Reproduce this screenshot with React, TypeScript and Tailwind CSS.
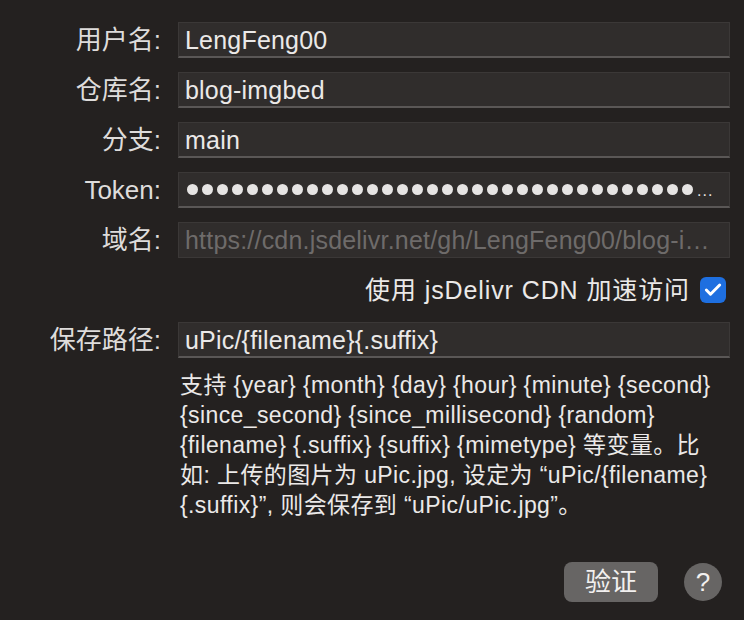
import { Check } from 'lucide-react';

const font = { fontFamily: '"Liberation Sans", "Noto Sans CJK SC", sans-serif' };

function Row({ label, children }: { label: string; children: React.ReactNode }) {
  return (
    <div className="flex items-center h-[36px]">
      <div className="w-[161px] text-right text-[26px] text-[#dedcdb] leading-[30px]">{label}</div>
      <div className="ml-[17px] w-[552px]">{children}</div>
    </div>
  );
}

function Field({ value, dim }: { value: string; dim?: boolean }) {
  return (
    <div
      className={`h-[36px] flex items-center px-[6px] bg-[#302d2c] border border-[#3b3837] ${
        dim ? 'border-b-[#3b3837]' : 'border-b-[#5a5756] border-b-2'
      }`}
    >
      <span className={`truncate text-[25px] leading-[30px] tracking-[0.2px] ${dim ? 'text-[#6e6b6a]' : 'text-[#ebe9e8]'}`}>
        {value}
      </span>
    </div>
  );
}

export default function App() {
  const dots = Array.from({ length: 34 });

  return (
    <div style={font} className="w-[744px] h-[620px] bg-[#242120] pt-[22px] flex flex-col">
      <div className="flex flex-col gap-[14px]">
        <Row label="用户名:">
          <Field value="LengFeng00" />
        </Row>
        <Row label="仓库名:">
          <Field value="blog-imgbed" />
        </Row>
        <Row label="分支:">
          <Field value="main" />
        </Row>
        <Row label="Token:">
          <div className="h-[36px] flex items-center px-[8px] gap-[4px] bg-[#302d2c] border border-[#3b3837] border-b-2 border-b-[#5a5756] overflow-hidden">
            {dots.map((_, i) => (
              <span key={i} className="w-[11px] h-[11px] shrink-0 rounded-full bg-[#e6e4e3]" />
            ))}
            <span className="text-[#e6e4e3] text-[16px] leading-none self-end mb-[7px] tracking-[1px]">...</span>
          </div>
        </Row>
        <Row label="域名:">
          <Field value="https://cdn.jsdelivr.net/gh/LengFeng00/blog-imgbed" dim />
        </Row>
        <div className="h-[36px] flex items-center justify-end pr-[18px] gap-[10px]">
          <span className="text-[25px] text-[#ebe9e8] leading-[30px] tracking-[0.9px]">使用 jsDelivr CDN 加速访问</span>
          <span className="w-[26px] h-[26px] rounded-[6px] bg-[#1e6fe0] flex items-center justify-center">
            <Check className="w-[20px] h-[20px] text-white" strokeWidth={3.5} />
          </span>
        </div>
        <Row label="保存路径:">
          <Field value="uPic/{filename}{.suffix}" />
        </Row>
      </div>

      <div className="ml-[180px] mt-[12px] text-[23px] leading-[30px] text-[#ebe9e8] tracking-[0.4px]">
        支持 {'{year} {month} {day} {hour} {minute} {second}'}
        <br />
        {'{since_second} {since_millisecond} {random}'}
        <br />
        {'{filename} {.suffix} {suffix} {mimetype}'} 等变量。比
        <br />
        如: 上传的图片为 uPic.jpg, 设定为 “uPic/{'{filename}'}
        <br />
        {'{.suffix}'}”, 则会保存到 “uPic/uPic.jpg”。
      </div>

      <div className="mt-auto mb-[18px] flex items-center justify-end pr-[22px] gap-[26px]">
        <button className="w-[94px] h-[40px] rounded-[8px] bg-[#676564] text-[26px] text-[#f2f0ef] leading-none">
          验证
        </button>
        <button className="w-[38px] h-[38px] rounded-full bg-[#676564] text-[26px] text-[#f2f0ef] leading-none flex items-center justify-center">
          ?
        </button>
      </div>
    </div>
  );
}
